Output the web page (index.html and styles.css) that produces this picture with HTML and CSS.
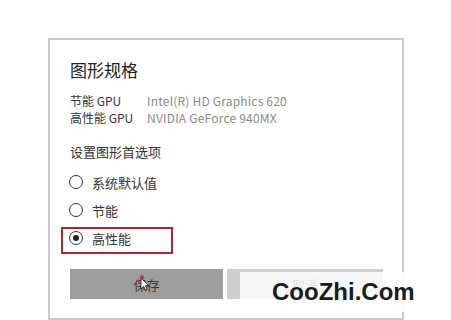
FILE: index.html
```html
<!DOCTYPE html>
<html lang="zh">
<head>
<meta charset="utf-8">
<link rel="stylesheet" href="styles.css">
</head>
<body>
<div class="dialog">
  <div class="title">图形规格</div>
  <div class="gpu">
    <div class="gpu-row"><span class="gpu-label">节能 GPU</span><span class="gpu-value">Intel(R) HD Graphics 620</span></div>
    <div class="gpu-row"><span class="gpu-label">高性能 GPU</span><span class="gpu-value">NVIDIA GeForce 940MX</span></div>
  </div>
  <div class="section">设置图形首选项</div>
  <div class="options">
    <div class="option"><span class="radio"></span><span>系统默认值</span></div>
    <div class="option"><span class="radio"></span><span>节能</span></div>
    <div class="option selected"><span class="radio on"></span><span>高性能</span></div>
  </div>
  <div class="buttons">
    <div class="btn save">保存
      <svg class="cursor" width="12" height="16" viewBox="0 0 12 16"><circle cx="3" cy="2.5" r="2.2" fill="#d33"/><path d="M2 3 L2 14 L4.6 11.4 L6.6 15.2 L8.2 14.4 L6.3 10.7 L9.8 10.7 Z" fill="#fff" stroke="#222" stroke-width="0.9"/></svg>
    </div>
    <div class="btn cancel">取消</div>
  </div>
</div>
<div class="watermark">CooZhi.Com</div>
</body>
</html>
```
FILE: styles.css
```css
html, body {
  margin: 0;
  padding: 0;
  background: #fff;
}
body {
  width: 451px;
  height: 320px;
  overflow: hidden;
  position: relative;
  font-family: "Noto Sans CJK SC", "Noto Sans", sans-serif;
  color: #333;
}
.dialog {
  margin: 38px 0 0 48px;
  border: 2px solid #c9c9c9;
  padding: 18px 0 0 20px;
  box-sizing: border-box;
  width: 356px;
  height: 282px;
}
.title {
  font-size: 17px;
  line-height: 24px;
  color: #222;
}
.gpu {
  margin-top: 10px;
}
.gpu-row {
  display: flex;
  align-items: center;
  height: 17px;
  font-size: 12px;
  line-height: 17px;
}
.gpu-label {
  width: 77px;
  color: #333;
}
.gpu-value {
  color: #8a8a8a;
  letter-spacing: 0.2px;
}
.section {
  margin-top: 16px;
  font-size: 13px;
  line-height: 20px;
  color: #333;
}
.options {
  margin-top: 6px;
}
.option {
  display: flex;
  align-items: center;
  height: 28px;
  font-size: 13px;
  color: #333;
  gap: 9px;
}
.option.selected {
  position: relative;
}
.option.selected::after {
  content: "";
  position: absolute;
  left: -9px;
  top: 3px;
  width: 112px;
  height: 27px;
  border: 2px solid #b1262c;
  box-sizing: border-box;
}
.radio {
  width: 14px;
  height: 14px;
  border: 1.6px solid #333;
  border-radius: 50%;
  box-sizing: border-box;
  margin-left: -1px;
  display: flex;
  align-items: center;
  justify-content: center;
}
.radio.on::before {
  content: "";
  width: 6px;
  height: 6px;
  border-radius: 50%;
  background: #222;
}
.buttons {
  margin-top: 17px;
  display: flex;
  gap: 4px;
}
.btn {
  height: 30px;
  display: flex;
  align-items: center;
  justify-content: center;
  font-size: 13px;
}
.save {
  width: 153px;
  background: #9d9d9d;
  color: #3a3a3a;
  position: relative;
}
.cancel {
  width: 156px;
  background: #cfcfcf;
  color: #555;
}
.cursor {
  position: absolute;
  left: 69px;
  top: 6px;
}
.watermark {
  position: absolute;
  left: 240px;
  top: 272px;
  width: 211px;
  height: 40px;
  background: rgba(255, 255, 255, 0.82);
  box-sizing: border-box;
  padding-left: 32px;
  font-family: "Liberation Sans", Arial, sans-serif;
  font-weight: bold;
  font-size: 24px;
  line-height: 40px;
  color: #1c1c1c;
}
```
